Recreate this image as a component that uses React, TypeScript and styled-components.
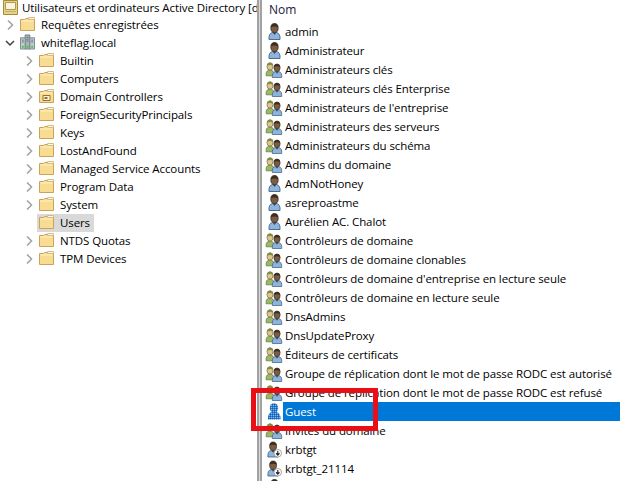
import React from "react";
import styled, { createGlobalStyle } from "styled-components";

const Global = createGlobalStyle`
  html, body { margin: 0; padding: 0; background: #fff; }
  body { font-family: "Open Sans", "Noto Sans", sans-serif; font-size: 11.5px; color: #000; }
`;

const Window = styled.div`
  position: relative;
  width: 620px;
  height: 481px;
  overflow: hidden;
  display: flex;
  background: #fff;
`;

const TreePane = styled.div`
  width: 257px;
  flex: none;
  overflow: hidden;
`;

const Splitter = styled.div`
  width: 5px;
  flex: none;
  background: #d8d8d8;
  border-left: 2px solid #a2a2a2;
  border-right: 2px solid #a2a2a2;
  box-sizing: border-box;
`;

const ListPane = styled.div`
  flex: 1;
  min-width: 0;
  overflow: hidden;
`;

const TreeRow = styled.div<{ $depth: number; $top?: boolean }>`
  display: flex;
  align-items: center;
  height: 18px;
  margin-top: ${(p) => (p.$top ? "-2px" : "0")};
  padding-left: ${(p) => p.$depth}px;
  white-space: nowrap;
`;

const Arrow = styled.span`
  width: 17px;
  height: 18px;
  flex: none;
  display: flex;
  align-items: center;
  justify-content: center;
`;

const TreeItem = styled.span<{ $selected?: boolean; $gap?: number; $level?: boolean }>`
  display: flex;
  align-items: center;
  gap: ${(p) => p.$gap ?? 6}px;
  height: 18px;
  box-sizing: border-box;
  padding: 0 4px ${(p) => (p.$level ? 0 : 2)}px 2px;
  background: ${(p) => (p.$selected ? "#d9d9d9" : "transparent")};
  letter-spacing: -0.1px;
`;

const Header = styled.div`
  height: 22px;
  box-sizing: border-box;
  padding: 0 0 4px 7px;
  display: flex;
  align-items: center;
  font-size: 12px;
  color: #1a1a40;
`;

const ListRow = styled.div`
  display: flex;
  align-items: center;
  height: 19px;
  white-space: nowrap;
`;

const IconSlot = styled.span`
  width: 17px;
  height: 19px;
  margin-left: 4px;
  flex: none;
  display: flex;
  align-items: center;
  justify-content: center;
`;

const Label = styled.span<{ $selected?: boolean }>`
  flex: ${(p) => (p.$selected ? 1 : "none")};
  height: 19px;
  line-height: 19px;
  padding-left: 2px;
  letter-spacing: -0.1px;
  background: ${(p) => (p.$selected ? "#0078d7" : "transparent")};
  color: ${(p) => (p.$selected ? "#fff" : "#000")};
`;

const Callout = styled.div`
  position: absolute;
  left: 251px;
  top: 388px;
  width: 127px;
  height: 43px;
  box-sizing: border-box;
  border: 5px solid #ea0f14;
  pointer-events: none;
`;

const GroupSvg = styled.svg`
  margin-left: -2px;
  flex: none;
`;

const Chevron = ({ open }: { open?: boolean }) => (
  <svg width="10" height="10" viewBox="0 0 10 10">
    {open ? (
      <path d="M1 3l4 4 4-4" fill="none" stroke="#404040" strokeWidth="1.5" />
    ) : (
      <path d="M3 .5l4.500 4.500-4.500 4.500" fill="none" stroke="#a6a6a6" strokeWidth="1.6" />
    )}
  </svg>
);

const Folder = ({ ou }: { ou?: boolean }) => (
  <svg width="15" height="14" viewBox="0 0 15 14">
    <path d="M.5 2.500h4l1-1h9v12H.5z" fill="#f8dc92" stroke="#c9a35c" />
    <path d="M1.500 3.500h12v1h-12z" fill="#fdf3cf" />
    <path d="M8.500.5h6v2h-6z" fill="#fff8e0" stroke="#d8bb7c" />
    {ou && (
      <>
        <path d="M4 6.500h7v5H4z" fill="#fff6d8" stroke="#8f7232" />
        <path d="M5.500 8h3v2h-3z" fill="#8f7232" />
      </>
    )}
  </svg>
);

const ConsoleIcon = () => (
  <svg width="15" height="15" viewBox="0 0 15 15">
    <path d="M.5.500h14v14H.5z" fill="#e7d288" stroke="#a68b3c" />
    <path d="M2.500 2.500h10v7h-10z" fill="#fbf6e0" stroke="#b29a4e" />
    <path d="M2 11.500h11" stroke="#c9b060" />
  </svg>
);

const DomainIcon = () => (
  <svg width="15" height="16" viewBox="0 0 16 16">
    <path d="M5.500.500h5v15h-5z" fill="#a9b7bd" stroke="#6c7a80" />
    <path d="M.5 3.500h5v12h-5z" fill="#c0ccd1" stroke="#78868c" />
    <path d="M10.500 3.500h5v12h-5z" fill="#c0ccd1" stroke="#78868c" />
    <path d="M2 6h2M2 8h2M7 3h2M7 5h2M7 7h2M12 6h2M12 8h2" stroke="#5d6b70" />
    <path d="M2 12h2v2H2zM7 12h2v2H7zM12 12h2v2h-2z" fill="#4fc23a" />
  </svg>
);

const Person = ({ x = 0, y = 0 }: { x?: number; y?: number }) => (
  <g transform={`translate(${x} ${y})`}>
    <path d="M1 16.500c-.4-4 .8-6.500 3.500-7h4c2.700.5 3.900 3 3.500 7z" fill="#8fb4dc" stroke="#3f6288" strokeWidth=".9" />
    <path d="M4.500 9.500h4l-2 2.500z" fill="#38506c" />
    <ellipse cx="6.500" cy="5" rx="3.700" ry="4.500" fill="#7d5d42" stroke="#2f261c" strokeWidth=".7" />
    <path d="M2.800 4.200c.2-2.700 2.200-3.700 3.700-3.700s3.500 1 3.700 3.700c-2.200-1.100-5.200-1.100-7.400 0z" fill="#3a2e22" />
  </g>
);

const UserIcon = () => (
  <svg width="15" height="17" viewBox="0 0 15 17">
    <Person x={1} />
  </svg>
);

const GroupIcon = () => (
  <GroupSvg width="18" height="16" viewBox="0 0 18 16">
    <g transform="translate(-.5 -1.500) scale(.85)">
      <path d="M2 18c-.6-3.500.6-6 3-6.500h3c2.400.5 3.600 3 3 6.500z" fill="#9cb865" stroke="#5e7d3a" strokeWidth=".9" />
      <ellipse cx="6.500" cy="7" rx="3.600" ry="4.300" fill="#e0c294" stroke="#6f6f3e" strokeWidth=".8" />
      <path d="M3 6c.2-2.700 2-3.700 3.500-3.700S9.800 3.300 10 6c-2-1-5-1-7 0z" fill="#7e8f3e" />
    </g>
    <g transform="translate(6.500 1.500) scale(.85)">
      <Person />
    </g>
  </GroupSvg>
);

const GuestIcon = () => (
  <svg width="15" height="17" viewBox="0 0 15 17">
    <defs>
      <pattern id="dither" width="2" height="2" patternUnits="userSpaceOnUse">
        <rect width="2" height="2" fill="#2a7cd0" />
        <rect width="1" height="1" fill="#7db6ee" />
        <rect x="1" y="1" width="1" height="1" fill="#1f5fa8" />
      </pattern>
    </defs>
    <path d="M1 16.500c-.4-4 1-7 4-7.500h4c3 .5 5 3.500 4.500 7.500z" fill="url(#dither)" />
    <ellipse cx="7" cy="5" rx="4.200" ry="4.800" fill="url(#dither)" />
  </svg>
);

const KrbtgtIcon = () => (
  <svg width="15" height="17" viewBox="0 0 16 17">
    <Person />
    <circle cx="11.500" cy="12.500" r="4" fill="#fff" stroke="#8a8a8a" strokeWidth=".8" />
    <path d="M11.500 10v4M9.700 12.500l1.800 2 1.800-2" fill="none" stroke="#222" strokeWidth="1.200" />
  </svg>
);

type Kind = "user" | "group" | "guest" | "krbtgt";

const rows: [string, Kind][] = [
  ["admin", "user"],
  ["Administrateur", "user"],
  ["Administrateurs clés", "group"],
  ["Administrateurs clés Enterprise", "group"],
  ["Administrateurs de l'entreprise", "group"],
  ["Administrateurs des serveurs", "group"],
  ["Administrateurs du schéma", "group"],
  ["Admins du domaine", "group"],
  ["AdmNotHoney", "user"],
  ["asreproastme", "user"],
  ["Aurélien AC. Chalot", "user"],
  ["Contrôleurs de domaine", "group"],
  ["Contrôleurs de domaine clonables", "group"],
  ["Contrôleurs de domaine d'entreprise en lecture seule", "group"],
  ["Contrôleurs de domaine en lecture seule", "group"],
  ["DnsAdmins", "group"],
  ["DnsUpdateProxy", "group"],
  ["Éditeurs de certificats", "group"],
  ["Groupe de réplication dont le mot de passe RODC est autorisé", "group"],
  ["Groupe de réplication dont le mot de passe RODC est refusé", "group"],
  ["Guest", "guest"],
  ["Invités du domaine", "group"],
  ["krbtgt", "krbtgt"],
  ["krbtgt_21114", "krbtgt"],
  ["", "user"],
];

const kindIcon = (k: Kind) =>
  k === "user" ? <UserIcon /> : k === "group" ? <GroupIcon /> : k === "guest" ? <GuestIcon /> : <KrbtgtIcon />;

const children: [string, boolean?, boolean?, boolean?][] = [
  ["Builtin"],
  ["Computers"],
  ["Domain Controllers", true],
  ["ForeignSecurityPrincipals"],
  ["Keys"],
  ["LostAndFound"],
  ["Managed Service Accounts"],
  ["Program Data"],
  ["System"],
  ["Users", false, true, true],
  ["NTDS Quotas"],
  ["TPM Devices"],
];

export default function App() {
  return (
    <Window>
      <Global />
      <TreePane>
        <TreeRow $depth={1} $top>
          <TreeItem $gap={4} $level>
            <ConsoleIcon />
            Utilisateurs et ordinateurs Active Directory [d
          </TreeItem>
        </TreeRow>
        <TreeRow $depth={1}>
          <Arrow><Chevron /></Arrow>
          <TreeItem>
            <Folder />
            Requêtes enregistrées
          </TreeItem>
        </TreeRow>
        <TreeRow $depth={1}>
          <Arrow><Chevron open /></Arrow>
          <TreeItem>
            <DomainIcon />
            whiteflag.local
          </TreeItem>
        </TreeRow>
        {children.map(([name, ou, selected, noArrow]) => (
          <TreeRow $depth={20} key={name}>
            <Arrow>{!noArrow && <Chevron />}</Arrow>
            <TreeItem $selected={selected}>
              <Folder ou={ou} />
              {name}
            </TreeItem>
          </TreeRow>
        ))}
      </TreePane>
      <Splitter />
      <ListPane>
        <Header>Nom</Header>
        {rows.map(([name, kind], i) => (
          <ListRow key={i}>
            <IconSlot>{kindIcon(kind)}</IconSlot>
            <Label $selected={kind === "guest"}>{name}</Label>
          </ListRow>
        ))}
      </ListPane>
      <Callout />
    </Window>
  );
}
